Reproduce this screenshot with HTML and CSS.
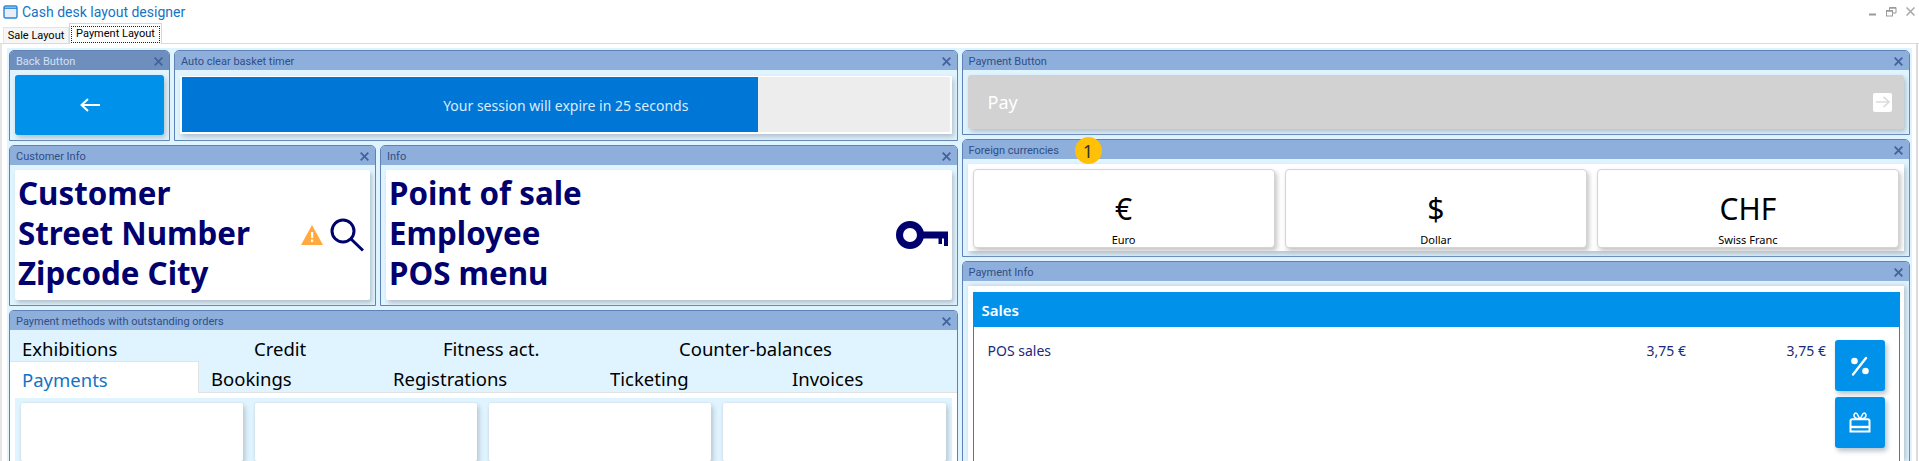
FILE: index.html
```html
<!DOCTYPE html>
<html lang="en">
<head>
  <meta charset="UTF-8">
  <title>Cash desk layout designer</title>
  <link rel="stylesheet" href="styles.css">
</head>
<body>

<header class="titlebar">
  <svg class="app-icon" width="15" height="14" viewBox="0 0 15 14"><rect x="1" y="1" width="13" height="12" rx="1.5" fill="#e8ecfb" stroke="#2a86d8" stroke-width="1.4"/><path d="M1 3.2h13" stroke="#2a86d8" stroke-width="1.4"/></svg>
  <span class="app-title">Cash desk layout designer</span>
  <div class="window-btns">
    <svg width="8" height="8" viewBox="0 0 8 8"><path d="M0 6.5h7" stroke="#9a9a9a" stroke-width="2"/></svg>
    <svg width="11" height="10" viewBox="0 0 11 10" fill="none" stroke="#9a9a9a"><rect x=".5" y="3.5" width="6" height="5.5"/><path d="M3.500 3V.5H10V6H7"/><path d="M.5 4h6M3.500 1h6.500" stroke-width="1.400"/></svg>
    <svg width="9" height="9" viewBox="0 0 9 9"><path d="M.5.500l8 8M8.500.500l-8 8" stroke="#a8a8a8" stroke-width="1.500"/></svg>
  </div>
</header>

<nav class="layout-tabs">
  <div class="layout-tab">Sale Layout</div>
  <div class="layout-tab active"><span>Payment Layout</span></div>
</nav>

<main class="frame">
  <div class="board">

    <section class="column">
      <div class="row row-timer">
        <div class="panel panel-back hovered">
          <div class="panel-head"><span>Back Button</span><svg class="close" viewBox="0 0 9 9"><path d="M.7.700l7.600 7.600M8.300.700L.7 8.300"/></svg></div>
          <div class="panel-body back-body">
            <button class="back-btn">
              <svg width="20" height="14" viewBox="0 0 20 14" fill="none" stroke="#fff" stroke-width="2"><path d="M1 7h19M8 1L1.500 7 8 13"/></svg>
            </button>
          </div>
        </div>
        <div class="panel panel-grow">
          <div class="panel-head"><span>Auto clear basket timer</span><svg class="close" viewBox="0 0 9 9"><path d="M.7.700l7.600 7.600M8.300.700L.7 8.300"/></svg></div>
          <div class="panel-body timer-body">
            <div class="timer">
              <div class="timer-track"><div class="timer-fill" style="width: 75%"></div></div>
              <div class="timer-text">Your session will expire in 25 seconds</div>
            </div>
          </div>
        </div>
      </div>

      <div class="row row-info">
        <div class="panel panel-customer">
          <div class="panel-head"><span>Customer Info</span><svg class="close" viewBox="0 0 9 9"><path d="M.7.700l7.600 7.600M8.300.700L.7 8.300"/></svg></div>
          <div class="panel-body info-body">
            <div class="info-card">
              <div class="big-text">Customer<br>Street Number<br>Zipcode City</div>
              <div class="info-icons">
                <svg width="22" height="20" viewBox="0 0 22 20"><path d="M11 0L22 20H0z" fill="#ffa93f"/><rect x="10" y="7" width="2.200" height="6" fill="#fff"/><rect x="10" y="14.500" width="2.200" height="2.400" fill="#fff"/></svg>
                <svg width="34" height="34" viewBox="0 0 34 34" fill="none" stroke="#00006e" stroke-width="3"><circle cx="13" cy="13" r="11"/><path d="M21 21l12 11.500"/></svg>
              </div>
            </div>
          </div>
        </div>
        <div class="panel panel-grow">
          <div class="panel-head"><span>Info</span><svg class="close" viewBox="0 0 9 9"><path d="M.7.700l7.600 7.600M8.300.700L.7 8.300"/></svg></div>
          <div class="panel-body info-body">
            <div class="info-card info-card-pos">
              <div class="big-text">Point of sale<br>Employee<br>POS menu</div>
              <div class="info-icons">
                <svg width="52" height="28" viewBox="0 0 52 28" fill="#00006e"><circle cx="14" cy="14" r="10.500" fill="none" stroke="#00006e" stroke-width="7"/><path d="M24 10.500h28V25h-4v-7.500h-2V23h-3.500v-5.500H24z"/></svg>
              </div>
            </div>
          </div>
        </div>
      </div>

      <div class="panel panel-fill">
        <div class="panel-head"><span>Payment methods with outstanding orders</span><svg class="close" viewBox="0 0 9 9"><path d="M.7.700l7.600 7.600M8.300.700L.7 8.300"/></svg></div>
        <div class="panel-body methods-body">
          <div class="tabs-row tabs-back">
            <div class="tab">Exhibitions</div>
            <div class="tab">Credit</div>
            <div class="tab">Fitness act.</div>
            <div class="tab">Counter-balances</div>
          </div>
          <div class="tabs-row tabs-front">
            <div class="tab active">Payments</div>
            <div class="tab">Bookings</div>
            <div class="tab">Registrations</div>
            <div class="tab">Ticketing</div>
            <div class="tab">Invoices</div>
          </div>
          <div class="tab-page">
            <div class="tile-grid">
              <div class="tile"></div>
              <div class="tile"></div>
              <div class="tile"></div>
              <div class="tile"></div>
            </div>
          </div>
        </div>
      </div>
    </section>

    <section class="column">
      <div class="panel panel-pay">
        <div class="panel-head"><span>Payment Button</span><svg class="close" viewBox="0 0 9 9"><path d="M.7.700l7.600 7.600M8.300.700L.7 8.300"/></svg></div>
        <div class="panel-body pay-body">
          <button class="pay-btn">
            <span>Pay</span>
            <span class="pay-arrow"><svg width="14" height="12" viewBox="0 0 14 12" fill="none" stroke="#dcdcdc" stroke-width="1.600"><path d="M0 6h13M7.500 .8L13 6l-5.500 5.200"/></svg></span>
          </button>
        </div>
      </div>

      <div class="panel panel-currency">
        <div class="panel-head"><span>Foreign currencies</span><svg class="close" viewBox="0 0 9 9"><path d="M.7.700l7.600 7.600M8.300.700L.7 8.300"/></svg></div>
        <div class="badge">1</div>
        <div class="panel-body currency-body">
          <div class="currency-card">
            <div class="currency"><div class="symbol">€</div><div class="label">Euro</div></div>
            <div class="currency"><div class="symbol">$</div><div class="label">Dollar</div></div>
            <div class="currency"><div class="symbol">CHF</div><div class="label">Swiss Franc</div></div>
          </div>
        </div>
      </div>

      <div class="panel panel-fill">
        <div class="panel-head"><span>Payment Info</span><svg class="close" viewBox="0 0 9 9"><path d="M.7.700l7.600 7.600M8.300.700L.7 8.300"/></svg></div>
        <div class="panel-body payinfo-body">
          <div class="payinfo-card">
            <div class="sales-table">
              <div class="sales-head">Sales</div>
              <div class="sales-body">
                <div class="sales-row">
                  <span class="sales-name">POS sales</span>
                  <span class="sales-amount">3,75 €</span>
                  <span class="sales-amount">3,75 €</span>
                </div>
                <div class="sales-actions">
                  <button class="action-btn">
                    <svg width="20" height="20" viewBox="0 0 20 20" fill="#fff"><circle cx="4.500" cy="5" r="3.300"/><circle cx="15.500" cy="15" r="3.300"/><path d="M16 2L3 18.500" stroke="#fff" stroke-width="2.400" stroke-linecap="round"/></svg>
                  </button>
                  <button class="action-btn">
                    <svg width="22" height="21" viewBox="0 0 22 21" fill="none" stroke="#fff" stroke-width="2"><path d="M1.500 9c0-1 .7-1.800 1.700-1.800h15.600c1 0 1.700.8 1.700 1.800v10.500H1.500z"/><path d="M1.500 15h19" stroke-width="2.400"/><path d="M11 7C9.500 5.500 8.800 1 7 1 5 1 4.500 3.500 5.500 5 6.500 6.500 9 7 11 7c2 0 4.500-.5 5.500-2 1-1.500.5-4-1.500-4-1.800 0-2.500 4.500-4 6z" stroke-width="1.500"/></svg>
                  </button>
                </div>
              </div>
            </div>
          </div>
        </div>
      </div>
    </section>

  </div>
</main>

</body>
</html>
```

FILE: styles.css
```css
* {
  box-sizing: border-box;
  margin: 0;
  padding: 0;
}

html, body {
  height: 100%;
  overflow: hidden;
}

body {
  background: #fff;
  color: #000;
  font-family: "Noto Sans", "Open Sans", Arial, sans-serif;
  display: flex;
  flex-direction: column;
}

/* window chrome */
.titlebar {
  height: 23px;
  display: flex;
  align-items: center;
  padding: 0 4px 0 3px;
  flex: none;
}

.app-title {
  margin-left: 4px;
  font-family: Roboto, Arial, sans-serif;
  font-size: 14px;
  color: #1473c4;
}

.window-btns {
  margin-left: auto;
  display: flex;
  align-items: center;
  gap: 9px;
}

.layout-tabs {
  height: 21px;
  display: flex;
  align-items: flex-end;
  padding-left: 3px;
  flex: none;
  border-bottom: 1px solid #dadada;
  font-family: Roboto, Arial, sans-serif;
  font-size: 11px;
}

.layout-tab {
  height: 16px;
  width: 66px;
  text-align: center;
  line-height: 16px;
  background: #f6f6f6;
  border: 1px solid #e4e4e4;
  border-bottom: none;
}

.layout-tab.active {
  height: 21px;
  width: 93px;
  margin-bottom: -1px;
  background: #fff;
  border: 1px solid #d6d6d6;
  border-bottom: none;
  padding: 2px 1px 1px;
}

.layout-tab.active span {
  display: block;
  height: 17px;
  line-height: 14px;
  border: 1px dotted #222;
}

/* designer surface */
.frame {
  flex: 1;
  min-height: 0;
  padding: 4px 4px 0 5px;
  border-left: 2px solid #e6e6e6;
  border-right: 2px solid #dcdcdc;
  margin-right: 1px;
}

.board {
  height: 100%;
  background: #dff4ff;
  display: flex;
  gap: 4px;
  padding: 2px 2px 0 2px;
}

.column {
  flex: 1;
  min-width: 0;
  display: flex;
  flex-direction: column;
  gap: 4px;
}

.row {
  display: flex;
  gap: 4px;
  flex: none;
}

.row-timer { height: 91px; }
.row-info { height: 161px; }

/* panels */
.panel {
  position: relative;
  display: flex;
  flex-direction: column;
  border: 1px solid #5f82b5;
  border-radius: 5px 5px 0 0;
  background: #dff4ff;
}

.panel-back { width: 161px; flex: none; }
.panel-customer { width: 367px; flex: none; }
.panel-grow { flex: 1; min-width: 0; }
.panel-fill { flex: 1; min-height: 0; border-bottom: none; }
.panel-pay { height: 85px; flex: none; }
.panel-currency { height: 118px; flex: none; }

.panel-head {
  height: 19px;
  flex: none;
  display: flex;
  align-items: center;
  justify-content: space-between;
  padding: 1px 6px 0;
  background: #8eaedb;
  border-radius: 4px 4px 0 0;
  font-family: Roboto, Arial, sans-serif;
  font-size: 11px;
  color: #2f4f86;
}

.hovered .panel-head {
  background: #6e8fbe;
  color: #d3e0f2;
}

.close {
  width: 9px;
  height: 9px;
  fill: none;
  stroke: #42639b;
  stroke-width: 1.800;
}

.panel-body {
  flex: 1;
  min-height: 0;
}

.back-body { padding: 5px; }

.back-btn {
  width: 100%;
  height: 60px;
  border: none;
  border-radius: 3px;
  background: #0091ea;
  box-shadow: 2px 3px 5px #b4c2cc;
  display: flex;
  align-items: center;
  justify-content: center;
}

.timer-body { padding: 6px 5px; }

.timer {
  position: relative;
  height: 58px;
  background: #fff;
  padding: 1px 2px;
  box-shadow: 2px 3px 5px #b4c2cc;
}

.timer-track {
  height: 55px;
  background: #ededed;
}

.timer-fill {
  height: 100%;
  background: #0076d7;
}

.timer-text {
  position: absolute;
  inset: 0;
  display: flex;
  align-items: center;
  justify-content: center;
  font-size: 14px;
  color: #d9ecfb;
}

.info-body { padding: 5px; }

.info-card {
  height: 130px;
  background: #fff;
  border-radius: 2px;
  box-shadow: 2px 3px 4px #b4c2cc;
  display: flex;
  align-items: center;
  justify-content: space-between;
  padding: 0 6px 0 3px;
}

.info-card-pos { padding-right: 4px; }

.big-text {
  font-size: 31.300px;
  font-weight: 700;
  line-height: 40px;
  color: #00006e;
  margin-top: -4px;
}

.info-icons {
  display: flex;
  align-items: center;
  gap: 7px;
}

/* payment method tabs */
.methods-body {
  display: flex;
  flex-direction: column;
}

.tabs-row {
  display: grid;
  flex: none;
  font-size: 18.500px;
}

.tabs-back {
  height: 31px;
  grid-template-columns: 232px 189px 236px 1fr;
  padding: 5px 0 0 12px;
  align-items: center;
}

.tabs-front {
  height: 32px;
  grid-template-columns: 189px 182px 217px 182px 1fr;
  border-bottom: 1px solid #e3e3e3;
}

.tab {
  padding: 4px 0 0 12px;
  line-height: 28px;
}

.tabs-back .tab { padding: 0; }

.tab.active {
  background: #fff;
  color: #1473c4;
  border-top: 1px solid #e3e3e3;
  border-right: 1px solid #e3e3e3;
  margin-bottom: -1px;
}

.tab-page {
  flex: 1;
  background: #fff;
  padding: 5px 5px 0;
}

.tile-grid {
  height: 100%;
  background: #dff4ff;
  display: grid;
  grid-template-columns: repeat(4, 1fr);
  gap: 12px;
  padding: 5px 6px 0;
}

.tile {
  background: #fff;
  border-radius: 2px;
  box-shadow: 0 0 2px #d0d8dc, 2px 3px 5px #b4c2cc;
}

/* right column */
.pay-body { padding: 5px; }

.pay-btn {
  width: 100%;
  height: 54px;
  border: none;
  border-radius: 3px;
  background: #d2d2d2;
  box-shadow: 2px 3px 5px #b4c2cc;
  display: flex;
  align-items: center;
  justify-content: space-between;
  padding: 0 12px 0 20px;
  font-family: inherit;
  font-size: 18px;
  color: #fff;
}

.pay-arrow {
  width: 19px;
  height: 19px;
  background: #fff;
  border-radius: 2px;
  display: flex;
  align-items: center;
  justify-content: center;
}

.badge {
  position: absolute;
  left: 112px;
  top: -3px;
  width: 27px;
  height: 27px;
  border-radius: 50%;
  background: #ffc107;
  display: flex;
  align-items: center;
  justify-content: center;
  font-size: 18px;
  color: #333;
}

.currency-body { padding: 5px; }

.currency-card {
  height: 87px;
  background: #fff;
  box-shadow: 2px 3px 5px #b4c2cc;
  padding: 5px;
  display: grid;
  grid-template-columns: repeat(3, 1fr);
  gap: 10px;
}

.currency {
  background: #fff;
  border: 1px solid #d4d4d4;
  border-radius: 4px;
  box-shadow: 2px 3px 5px #c4c4c4;
  text-align: center;
}

.symbol {
  margin-top: 20px;
  font-size: 30px;
  line-height: 38px;
}

.label {
  margin-top: 4px;
  font-size: 11px;
  line-height: 15px;
}

.payinfo-body { padding: 5px 5px 0; }

.payinfo-card {
  height: 100%;
  background: #fff;
  padding: 6px 4px 0 5px;
  box-shadow: 2px 0 5px #b4c2cc;
}

.sales-table {
  height: 100%;
  border: 1px solid #0091ea;
  border-bottom: none;
}

.sales-head {
  height: 34px;
  background: #0091ea;
  color: #fff;
  font-size: 15px;
  font-weight: 600;
  line-height: 34px;
  padding-left: 8px;
}

.sales-body {
  display: flex;
  padding: 13px 14px 0 14px;
}

.sales-row {
  flex: 1;
  display: flex;
  font-size: 14px;
  color: #1c2a78;
  line-height: 20px;
  padding-top: 1px;
}

.sales-name { flex: 1; }

.sales-amount {
  width: 140px;
  text-align: right;
}

.sales-actions {
  margin-left: 9px;
  display: flex;
  flex-direction: column;
  gap: 6px;
}

.action-btn {
  width: 50px;
  height: 51px;
  border: none;
  border-radius: 3px;
  background: #0091ea;
  box-shadow: 2px 3px 5px #b4c2cc;
  display: flex;
  align-items: center;
  justify-content: center;
}
```
